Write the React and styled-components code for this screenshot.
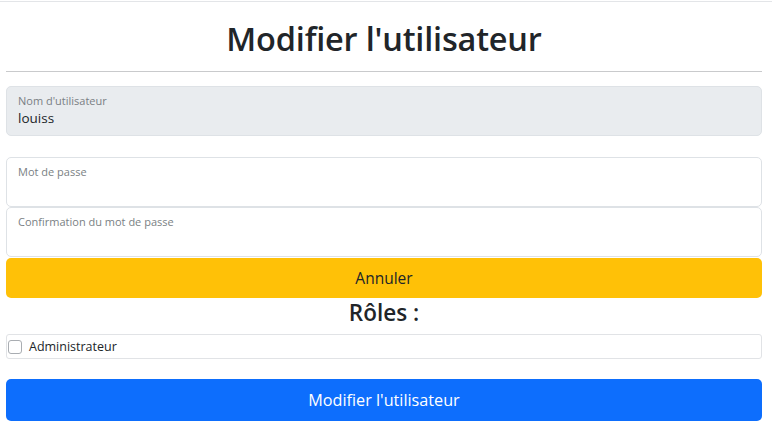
import React from 'react';
import styled, { createGlobalStyle } from 'styled-components';

const GlobalStyle = createGlobalStyle`
      body {
            margin: 0;
            background: #ffffff;
            font-family: "Open Sans", "Noto Sans", sans-serif;
            color: #212529;
      }
`;

const Page = styled.div`
      border-top: 1px solid #e3e5e8;
      margin-top: 1px;
      padding: 0 10px 0 6px;
`;

const Title = styled.h1`
      margin: 0;
      padding-top: 15px;
      height: 54px;
      text-align: center;
      font-size: 32.5px;
      font-weight: 600;
      line-height: 44px;
      letter-spacing: -0.2px;
`;

const Rule = styled.hr`
      margin: 0 0 14px 0;
      border: 0;
      border-top: 1px solid #c9cacc;
`;

const Field = styled.div`
      box-sizing: border-box;
      height: ${(p) => p.$h || 50}px;
      margin-bottom: ${(p) => p.$mb || 0}px;
      padding: 6px 11px 0;
      background: ${(p) => (p.$disabled ? '#e9ecef' : '#ffffff')};
      border: 1px solid #dee2e6;
      border-radius: 5px;
      display: flex;
      flex-direction: column;
`;

const FieldLabel = styled.label`
      font-size: 11px;
      line-height: 16px;
      color: #7a7f84;
`;

const FieldValue = styled.span`
      font-size: 13.5px;
      line-height: 18px;
      color: #212529;
`;

const Button = styled.button`
      display: block;
      width: 100%;
      box-sizing: border-box;
      height: ${(p) => p.$h}px;
      border: 0;
      border-radius: 5px;
      background: ${(p) => p.$bg};
      color: ${(p) => p.$color};
      font-family: "Open Sans", "Noto Sans", sans-serif;
      font-size: ${(p) => p.$fs || 15.5}px;
      cursor: pointer;
`;

const SubTitle = styled.h2`
      margin: 0;
      height: 36px;
      text-align: center;
      font-size: 22.5px;
      font-weight: 600;
      line-height: 30px;
`;

const CheckRow = styled.label`
      box-sizing: border-box;
      height: 25px;
      display: flex;
      align-items: center;
      gap: 7px;
      padding-left: 1px;
      border: 1px solid #e1e3e6;
      border-radius: 3px;
      font-size: 12.5px;
      color: #212529;
`;

const Box = styled.span`
      width: 12px;
      height: 12px;
      border: 1px solid #a9adb2;
      border-radius: 3px;
      background: #fff;
`;

const Spacer = styled.div`
      height: 20px;
`;

const App = () => {
      return (
            <>
            <GlobalStyle />
            <Page>
                  <Title>Modifier l'utilisateur</Title>
                  <Rule />
                  <Field $disabled $mb={21}>
                        <FieldLabel>Nom d'utilisateur</FieldLabel>
                        <FieldValue>louiss</FieldValue>
                  </Field>
                  <Field>
                        <FieldLabel>Mot de passe</FieldLabel>
                  </Field>
                  <Field $mb={1}>
                        <FieldLabel>Confirmation du mot de passe</FieldLabel>
                  </Field>
                  <Button $h={40} $bg="#ffc107" $color="#212529">Annuler</Button>
                  <SubTitle>Rôles :</SubTitle>
                  <CheckRow>
                        <Box />
                        Administrateur
                  </CheckRow>
                  <Spacer />
                  <Button $h={42} $fs={16.2} $bg="#0d6efd" $color="#ffffff">Modifier l'utilisateur</Button>
            </Page>
            </>
      );
};

export default App;
